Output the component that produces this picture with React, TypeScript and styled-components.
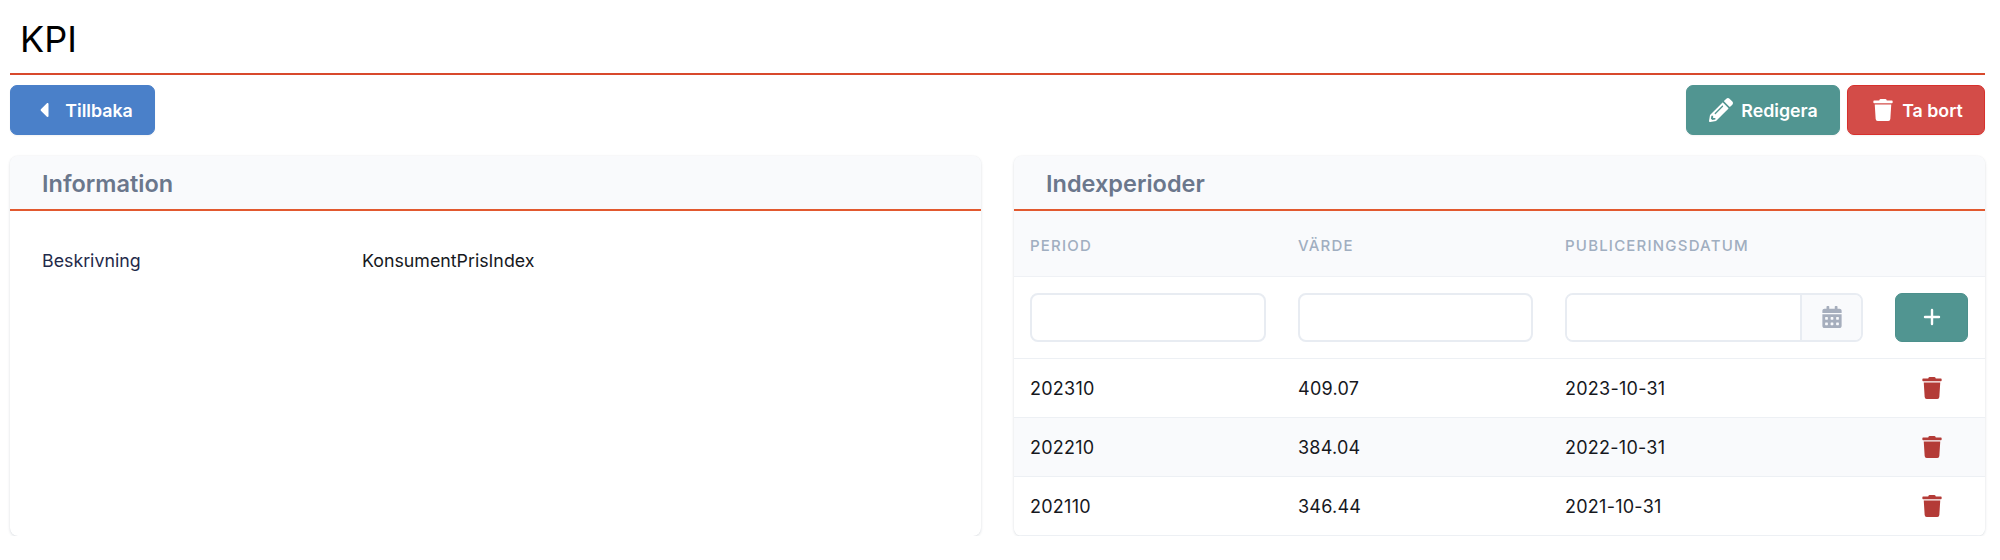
import styled, { createGlobalStyle } from "styled-components";
import { FaCalendarAlt, FaCaretLeft, FaPencilAlt, FaTrash } from "react-icons/fa";
import { Plus } from "lucide-react";

interface IndexPeriod {
  period: string;
  value: string;
  date: string;
}

const periods: IndexPeriod[] = [
  { period: "202310", value: "409.07", date: "2023-10-31" },
  { period: "202210", value: "384.04", date: "2022-10-31" },
  { period: "202110", value: "346.44", date: "2021-10-31" },
];

const GlobalStyle = createGlobalStyle`
  html, body {
    margin: 0;
    background: #fff;
  }
  body {
    font-family: Inter, "Liberation Sans", sans-serif;
    color: #000;
  }
`;

const Page = styled.div`
  padding: 0 15px 0 10px;
`;

const Heading = styled.h1`
  margin: 0;
  height: 73px;
  padding: 19px 0 0 10px;
  box-sizing: border-box;
  font-size: 36px;
  line-height: 40px;
  font-weight: 400;
`;

const Rule = styled.div`
  height: 2px;
  background: #d8492c;
`;

const Toolbar = styled.div`
  display: flex;
  justify-content: space-between;
  margin-top: 10px;
`;

const ButtonGroup = styled.div`
  display: flex;
  gap: 7px;
`;

const tones = {
  blue: { bg: "#4a80c9", border: "#4a80c9" },
  teal: { bg: "#519591", border: "#519591" },
  red: { bg: "#d34c48", border: "#d8302c" },
};

const Button = styled.button<{ $tone: keyof typeof tones; $width: number; $gap: number; $inset?: number }>`
  display: flex;
  align-items: center;
  justify-content: center;
  gap: ${(p) => p.$gap}px;
  width: ${(p) => p.$width}px;
  height: 50px;
  box-sizing: border-box;
  padding: 0 0 0 ${(p) => p.$inset ?? 0}px;
  border: 1px solid ${(p) => tones[p.$tone].border};
  border-radius: 7px;
  background: ${(p) => tones[p.$tone].bg};
  color: #fff;
  font-family: inherit;
  font-size: 17.8px;
  font-weight: 600;
  box-shadow: 0 1px 2px rgba(0, 0, 0, 0.05);
`;

const Columns = styled.div`
  display: grid;
  grid-template-columns: 1fr 1fr;
  gap: 33px;
  margin-top: 21px;
`;

const Card = styled.section`
  height: 380px;
  border-radius: 8px;
  background: #fff;
  overflow: hidden;
  box-shadow: 0 1px 3px rgba(30, 50, 80, 0.14), 0 0 1px rgba(30, 50, 80, 0.1);
`;

const CardHeader = styled.header`
  height: 55px;
  box-sizing: border-box;
  padding: 13px 32px 0;
  background: #f9fafc;
  border-bottom: 2px solid #e2592f;
`;

const CardTitle = styled.h2`
  margin: 0;
  font-size: 23.5px;
  line-height: 30px;
  font-weight: 600;
  color: #6b778c;
`;

const InfoRow = styled.div`
  display: grid;
  grid-template-columns: 320px 1fr;
  padding: 38px 32px 0;
  font-size: 17.8px;
  line-height: 24px;
  color: #16181d;
`;

const InfoLabel = styled.div`
  color: #1f2a4a;
`;

const Table = styled.table`
  width: 100%;
  table-layout: fixed;
  border-collapse: collapse;
`;

const HeadCell = styled.th`
  height: 65px;
  padding: 4px 16px 0;
  box-sizing: border-box;
  background: #f9fafc;
  border-bottom: 1px solid #eff1f5;
  text-align: left;
  font-size: 15px;
  font-weight: 500;
  letter-spacing: 1.2px;
  color: #a0aec0;
`;

const FormCell = styled.td`
  height: 82px;
  padding: 0 16px;
  box-sizing: border-box;
  border-bottom: 1px solid #edf0f4;
`;

const DataRow = styled.tr<{ $striped: boolean }>`
  background: ${(p) => (p.$striped ? "#f9fafc" : "#fff")};
`;

const DataCell = styled.td`
  height: 59px;
  padding: 2px 16px 0;
  box-sizing: border-box;
  border-bottom: 1px solid #edf0f4;
  font-size: 18px;
  letter-spacing: 0.25px;
  color: #16181d;
`;

const IconCell = styled(DataCell)`
  padding-top: 0;
  text-align: center;
  font-size: 0;
`;

const TextInput = styled.input`
  display: block;
  width: 100%;
  height: 49px;
  box-sizing: border-box;
  border: 2px solid #e8ecf2;
  border-radius: 8px;
  background: #fff;
`;

const DateGroup = styled.div`
  display: flex;
  height: 49px;
  box-sizing: border-box;
  border: 2px solid #e8ecf2;
  border-radius: 8px;
  overflow: hidden;
`;

const DateInput = styled.input`
  flex: 1;
  min-width: 0;
  border: 0;
  background: #fff;
`;

const DateAddon = styled.div`
  display: flex;
  align-items: center;
  justify-content: center;
  width: 59px;
  border-left: 2px solid #e8ecf2;
  background: #f9fafc;
  color: #a6aebd;
  font-size: 22px;
`;

const AddButton = styled.button`
  display: flex;
  align-items: center;
  justify-content: center;
  width: 73px;
  height: 49px;
  padding: 0;
  border: 1px solid #4c908c;
  border-radius: 7px;
  background: #519591;
  color: #fff;
`;

const RemoveIcon = styled(FaTrash)`
  font-size: 22px;
  color: #b43b37;
`;

export default function App() {
  return (
    <Page>
      <GlobalStyle />
      <Heading>KPI</Heading>
      <Rule />
      <Toolbar>
        <Button $tone="blue" $width={145} $gap={9}>
          <FaCaretLeft size={24} />
          Tillbaka
        </Button>
        <ButtonGroup>
          <Button $tone="teal" $width={154} $gap={8} $inset={1}>
            <FaPencilAlt size={24} />
            Redigera
          </Button>
          <Button $tone="red" $width={138} $gap={8} $inset={3}>
            <FaTrash size={22} />
            Ta bort
          </Button>
        </ButtonGroup>
      </Toolbar>
      <Columns>
        <Card>
          <CardHeader>
            <CardTitle>Information</CardTitle>
          </CardHeader>
          <InfoRow>
            <InfoLabel>Beskrivning</InfoLabel>
            <div>KonsumentPrisIndex</div>
          </InfoRow>
        </Card>
        <Card>
          <CardHeader>
            <CardTitle>Indexperioder</CardTitle>
          </CardHeader>
          <Table>
            <colgroup>
              <col width="268" />
              <col width="267" />
              <col width="330" />
              <col width="106" />
            </colgroup>
            <thead>
              <tr>
                <HeadCell>PERIOD</HeadCell>
                <HeadCell>VÄRDE</HeadCell>
                <HeadCell>PUBLICERINGSDATUM</HeadCell>
                <HeadCell />
              </tr>
            </thead>
            <tbody>
              <tr>
                <FormCell>
                  <TextInput />
                </FormCell>
                <FormCell>
                  <TextInput />
                </FormCell>
                <FormCell>
                  <DateGroup>
                    <DateInput />
                    <DateAddon>
                      <FaCalendarAlt />
                    </DateAddon>
                  </DateGroup>
                </FormCell>
                <FormCell>
                  <AddButton>
                    <Plus size={24} strokeWidth={2.4} />
                  </AddButton>
                </FormCell>
              </tr>
              {periods.map((row, index) => (
                <DataRow key={row.period} $striped={index === 1}>
                  <DataCell>{row.period}</DataCell>
                  <DataCell>{row.value}</DataCell>
                  <DataCell>{row.date}</DataCell>
                  <IconCell>
                    <RemoveIcon />
                  </IconCell>
                </DataRow>
              ))}
            </tbody>
          </Table>
        </Card>
      </Columns>
    </Page>
  );
}
